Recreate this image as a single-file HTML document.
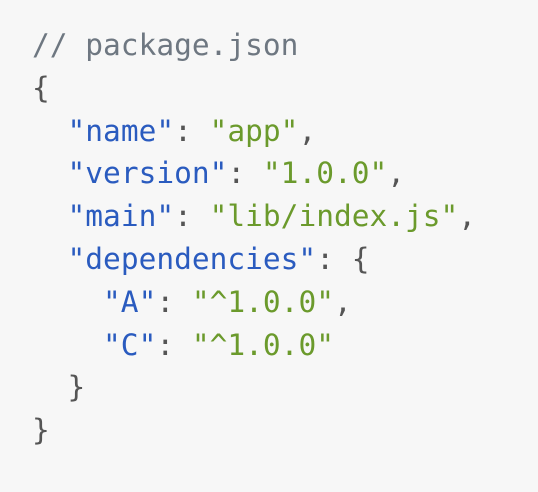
<!DOCTYPE html>
<html><head><style>
html,body{margin:0;padding:0;background:#f7f7f7;width:538px;height:492px;overflow:hidden}
pre{margin:0;position:absolute;left:32px;top:24px;font-family:"DejaVu Sans Mono","Liberation Mono",monospace;font-size:29.5px;line-height:42.8px;color:#555}
.c{color:#6e7781}.k{color:#2a5bbf}.s{color:#6b9a2c}
</style></head><body>
<pre><span class="c">// package.json</span>
{
  <span class="k">"name"</span>: <span class="s">"app"</span>,
  <span class="k">"version"</span>: <span class="s">"1.0.0"</span>,
  <span class="k">"main"</span>: <span class="s">"lib/index.js"</span>,
  <span class="k">"dependencies"</span>: {
    <span class="k">"A"</span>: <span class="s">"^1.0.0"</span>,
    <span class="k">"C"</span>: <span class="s">"^1.0.0"</span>
  }
}</pre>
</body></html>
